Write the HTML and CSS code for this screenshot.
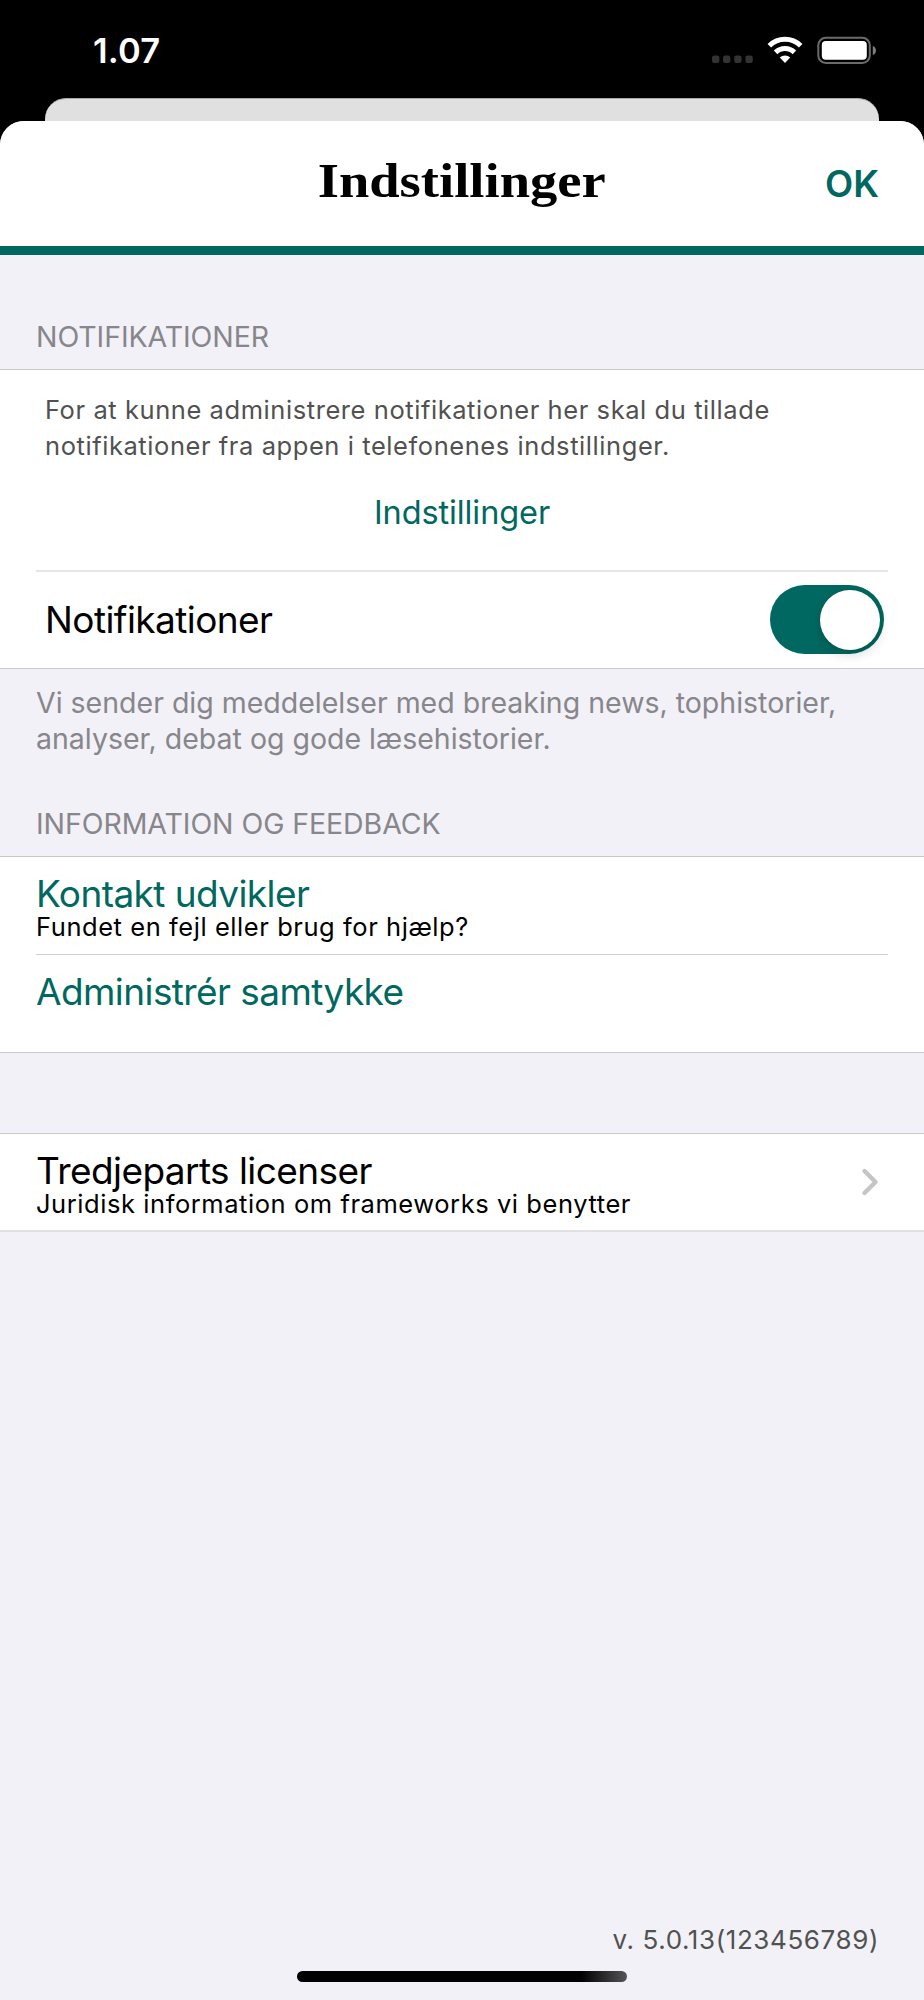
FILE: index.html
```html
<!DOCTYPE html>
<html lang="da">
<head>
<meta charset="utf-8">
<title>Indstillinger</title>
<link rel="stylesheet" href="styles.css">
</head>
<body>
<div class="phone">
  <div class="status">
    <span class="time">1.07</span>
    <svg class="status-icons" width="166" height="28" viewBox="0 0 166 28">
      <g fill="#333"><rect x="0" y="19.500" width="7.400" height="7.400" rx="2.200"/><rect x="11" y="19.500" width="7.400" height="7.400" rx="2.200"/><rect x="22.200" y="19.500" width="7.400" height="7.400" rx="2.200"/><rect x="33.400" y="19.500" width="7.400" height="7.400" rx="2.200"/></g>
      <g fill="none" stroke="#fff" stroke-width="5"><path d="M57.300 9.700a22.400 22.400 0 0 1 31.400 0"/><path d="M63.600 16.400a13.400 13.400 0 0 1 18.800 0"/></g>
      <path fill="#fff" d="M67.800 21.600a7.600 7.600 0 0 1 10.400 0L73 27z"/>
      <rect x="106.300" y="1.800" width="51.500" height="25.200" rx="7.500" fill="none" stroke="#6b6b6b" stroke-width="2"/>
      <rect x="109.800" y="5" width="45" height="18.800" rx="4" fill="#fff"/>
      <path d="M160.800 10c4.200 1.200 4.200 7.800 0 9z" fill="#808080"/>
    </svg>
  </div>
  <div class="card-behind"></div>
  <main class="sheet">
    <header class="head">
      <h1 class="title">Indstillinger</h1>
      <span class="ok">OK</span>
    </header>
    <h2 class="group-title first">NOTIFIKATIONER</h2>
    <section class="group">
      <div class="permission">
        <p class="hint">For at kunne administrere notifikationer her skal du tillade<br>notifikationer fra appen i telefonenes indstillinger.</p>
        <a class="settings-link">Indstillinger</a>
      </div>
      <div class="sep light"></div>
      <div class="switch-row">
        <span class="label">Notifikationer</span>
        <span class="switch"><span class="knob"></span></span>
      </div>
    </section>
    <p class="footnote">Vi sender dig meddelelser med breaking news, tophistorier,<br>analyser, debat og gode læsehistorier.</p>
    <h2 class="group-title info">INFORMATION OG FEEDBACK</h2>
    <section class="group">
      <div class="row">
        <span class="label green">Kontakt udvikler</span>
        <span class="sub">Fundet en fejl eller brug for hjælp?</span>
      </div>
      <div class="sep"></div>
      <div class="row">
        <span class="label green">Administrér samtykke</span>
      </div>
    </section>
    <section class="group licenses">
      <div class="row">
        <span class="label">Tredjeparts licenser</span>
        <span class="sub">Juridisk information om frameworks vi benytter</span>
      </div>
      <svg class="chevron" width="18" height="30" viewBox="0 0 18 30"><path d="M3.500 4l11 11-11 11" fill="none" stroke="#c5c5c7" stroke-width="4.400" stroke-linecap="round" stroke-linejoin="round"/></svg>
    </section>
    <footer class="foot">
      <span class="version">v. 5.0.13(123456789)</span>
      <div class="home"></div>
    </footer>
  </main>
</div>
</body>
</html>
```

FILE: styles.css
```css
* { box-sizing: border-box; }
body { margin: 0; background: #000; font-family: Inter, "Liberation Sans", sans-serif; color: #000; }
h1, h2, p { margin: 0; font-weight: 400; }
.phone { width: 924px; height: 2000px; display: flex; flex-direction: column; overflow: hidden; }
.status { height: 98px; flex: none; display: flex; justify-content: space-between; align-items: flex-start; padding: 36px 46px 0 93px; }
.time { color: #fff; font-size: 34.500px; line-height: 30px; font-weight: 600; letter-spacing: .2px; }
.card-behind { height: 23px; flex: none; margin: 0 45px; background: #e0e0e0; border-radius: 21px 21px 0 0; border-top: 1px solid #a9a9a9; }
.sheet { flex: 1; min-height: 0; background: #f2f1f7; border-radius: 24px 24px 0 0; overflow: hidden; display: flex; flex-direction: column; }
.head { height: 134px; flex: none; display: grid; grid-template-columns: 1fr auto 1fr; background: #fff; border-bottom: 9px solid #006860; }
.title { grid-column: 2; font-family: "Liberation Serif", serif; font-weight: 700; font-size: 48px; line-height: 56px; padding-top: 32px; white-space: nowrap; transform: scaleX(1.137); }
.ok { justify-self: end; margin-right: 45px; padding-top: 40px; color: #006860; font-size: 36.700px; line-height: 46px; font-weight: 600; }
.group-title { font-size: 28.500px; line-height: 36px; color: #87868b; padding-left: 36px; white-space: nowrap; letter-spacing: -.08px; flex: none; }
.first { margin: 64px 0 14px; height: 36px; }
.info { margin-top: 49px; height: 50px; }
.group { background: #fff; border-top: 1px solid #c9c9cc; border-bottom: 1px solid #c9c9cc; flex: none; }
.permission { height: 200px; padding: 22px 45px 0; display: flex; flex-direction: column; }
.hint { font-size: 25.500px; line-height: 35.700px; color: #515151; white-space: nowrap; letter-spacing: .57px; }
.settings-link { align-self: center; margin-top: 28px; font-size: 32.500px; line-height: 44px; color: #006860; letter-spacing: -.1px; }
.sep { height: 1px; margin: 0 36px; background: #cfcfd1; }
.light { height: 2px; background: #e6e6e7; }
.switch-row { height: 96px; padding: 0 40px 0 45px; display: flex; align-items: center; justify-content: space-between; }
.label { font-size: 37px; line-height: 44px; white-space: nowrap; letter-spacing: -.58px; }
.green { color: #006860; }
.switch { width: 114px; height: 69px; margin-bottom: 1px; border-radius: 35px; background: #006860; padding: 4.500px; display: flex; justify-content: flex-end; }
.knob { width: 60px; height: 60px; border-radius: 50%; background: #fff; box-shadow: 0 4px 12px rgba(0,0,0,.18); }
.footnote { font-size: 28.500px; line-height: 36px; color: #87868b; padding: 16px 0 0 36px; white-space: nowrap; flex: none; }
.row { height: 97px; padding: 15px 0 0 36px; display: flex; flex-direction: column; }
.sub { margin-top: -4px; font-size: 25.500px; line-height: 30px; white-space: nowrap; letter-spacing: .56px; }
.licenses { margin-top: 80px; display: flex; justify-content: space-between; align-items: center; padding-right: 45px; border-bottom: 2px solid #e0e0e2; }
.licenses .row { height: 96px; }
.foot { margin-top: auto; display: flex; flex-direction: column; }
.version { align-self: flex-end; margin-right: 45px; font-size: 26px; line-height: 36px; color: #515151; letter-spacing: .6px; }
.home { width: 330px; height: 11px; border-radius: 6px; align-self: center; margin: 13px 0 18px; background: linear-gradient(90deg, #000 86%, #555 100%); }
```
